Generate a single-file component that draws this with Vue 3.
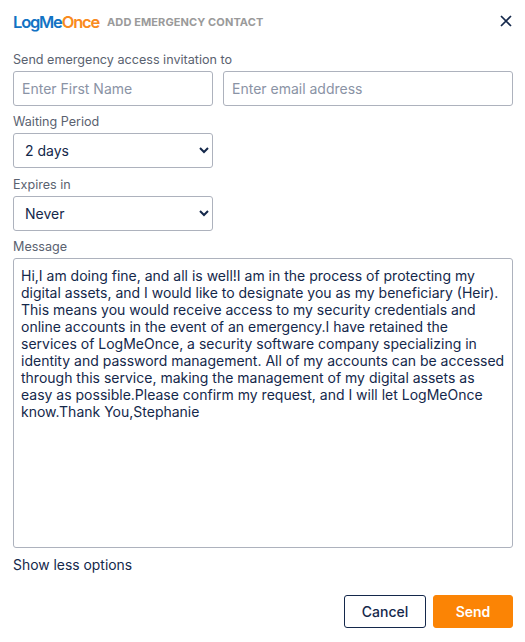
<script setup>
const message = "Hi,I am doing fine, and all is well!I am in the process of protecting my digital assets, and I would like to designate you as my beneficiary (Heir). This means you would receive access to my security credentials and online accounts in the event of an emergency.I have retained the services of LogMeOnce, a security software company specializing in identity and password management. All of my accounts can be accessed through this service, making the management of my digital assets as easy as possible.Please confirm my request, and I will let LogMeOnce know.Thank You,Stephanie";
</script>

<template>
  <div class="dialog">
    <header class="head">
      <div class="brand">
        <span class="logo"><span class="blue">LogMe</span><span class="orange">Once</span></span>
        <span class="title">ADD EMERGENCY CONTACT</span>
      </div>
      <svg class="close" width="14" height="14" viewBox="0 0 14 14" aria-label="Close">
        <path d="M2 2 L12 12 M12 2 L2 12" stroke="#14284b" stroke-width="1.7" fill="none" />
      </svg>
    </header>

    <label class="label first">Send emergency access invitation to</label>
    <div class="row">
      <input class="input name" placeholder="Enter First Name" />
      <input class="input email" placeholder="Enter email address" />
    </div>

    <label class="label">Waiting Period</label>
    <select class="select">
      <option>2 days</option>
    </select>

    <label class="label">Expires in</label>
    <select class="select">
      <option>Never</option>
    </select>

    <label class="label">Message</label>
    <textarea class="message" :value="message"></textarea>

    <a class="toggle">Show less options</a>

    <footer class="actions">
      <button class="btn cancel">Cancel</button>
      <button class="btn send">Send</button>
    </footer>
  </div>
</template>

<style>
html, body { margin: 0; background: #fff; }
</style>

<style scoped>
.dialog {
  width: 525px;
  height: 642px;
  box-sizing: border-box;
  padding: 11px 12px 0 13px;
  font-family: Inter, "Liberation Sans", sans-serif;
  color: #14284b;
  background: #fff;
  display: flex;
  flex-direction: column;
  align-items: flex-start;
}
.head {
  width: 100%;
  height: 22px;
  display: flex;
  align-items: center;
  justify-content: space-between;
}
.brand { display: flex; align-items: center; gap: 8px; }
.logo {
  font-family: Inter, sans-serif;
  font-size: 16.5px;
  font-weight: 600;
  letter-spacing: -1.2px;
  line-height: 22px;
}
.blue { color: #1273c4; }
.orange { color: #f98a20; }
.title {
  font-size: 11px;
  font-weight: 700;
  color: #9a9a9a;
  letter-spacing: 0.1px;
}
.close { margin-bottom: 3px; }
.label {
  display: block;
  font-size: 12.6px;
  line-height: 16px;
  color: #5a6270;
  margin-top: 8.2px;
  margin-bottom: 3.3px;
}
.label.first { margin-top: 19px; margin-bottom: 3px; }
.row { display: flex; gap: 10px; width: 100%; }
.input {
  height: 35px;
  box-sizing: border-box;
  border: 1px solid #adb2bd;
  border-radius: 3px;
  padding: 0 8px;
  font: 400 14px Inter, sans-serif;
  color: #14284b;
  outline: none;
  background: #fff;
}
.input::placeholder { color: #8a93a5; opacity: 1; }
.name { width: 200px; }
.email { width: 290px; }
.select {
  width: 200px;
  height: 35px;
  box-sizing: border-box;
  border: 1px solid #adb2bd;
  border-radius: 3px;
  padding: 0 7px;
  font: 400 14px Inter, sans-serif;
  color: #14284b;
  background-color: #fff;
}
.message {
  width: 500px;
  height: 290px;
  box-sizing: border-box;
  border: 1px solid #adb2bd;
  border-radius: 3px;
  padding: 7.5px 7px;
  font: 400 14px/17px Inter, sans-serif;
  color: #14284b;
  resize: none;
  outline: none;
  margin: 0;
  display: block;
  overflow: hidden;
}
.toggle {
  font-size: 13.9px;
  line-height: 16px;
  color: #14284b;
  margin-top: 8.5px;
}
.actions {
  width: 500px;
  display: flex;
  justify-content: flex-end;
  gap: 7px;
  margin-top: 22px;
}
.btn {
  height: 33px;
  box-sizing: border-box;
  border-radius: 3px;
  font: 500 14px Inter, sans-serif;
  cursor: pointer;
  padding: 0;
}
.cancel {
  width: 82px;
  background: #fff;
  border: 1px solid #14284b;
  color: #14284b;
}
.send {
  width: 80px;
  background: #fb8405;
  border: 1px solid #fb8405;
  color: #fff;
  font-weight: 600;
}
</style>
